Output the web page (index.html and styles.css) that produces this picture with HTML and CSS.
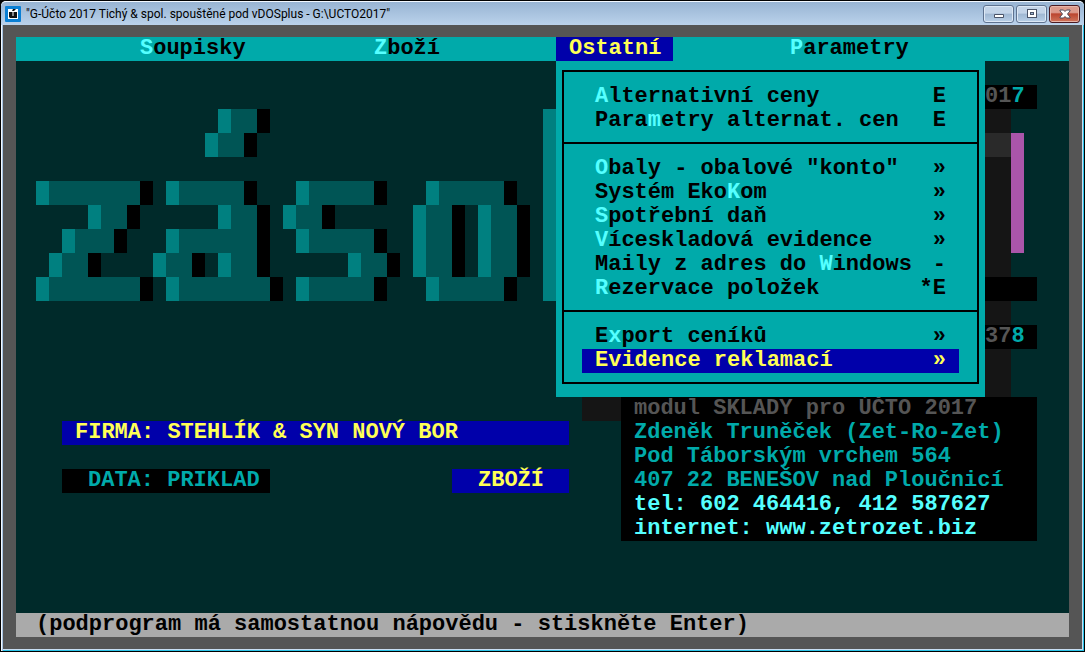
FILE: index.html
```html
<!DOCTYPE html>
<html lang="cs">
<head>
<meta charset="utf-8">
<title>G-Účto 2017</title>
<link rel="stylesheet" href="styles.css">
</head>
<body>
<div class="window">
  <header class="titlebar">
    <svg class="app-icon" viewBox="0 0 16 16" aria-hidden="true">
      <rect width="16" height="16" rx="1" fill="#0a7fd4"/>
      <rect x="3" y="3" width="10" height="10" fill="#fff"/>
      <path d="M4 6h3v4h2V6h3v6H5l-1-1zM8 3h3L9 5H7z" fill="#111"/>
      <path d="M7 6h2v4H7z" fill="#888"/>
    </svg>
    <h1 class="title">"G-Účto 2017 Tichý &amp; spol. spouštěné pod vDOSplus - G:\UCTO2017"</h1>
    <div class="controls">
      <button class="control" type="button" aria-label="Minimalizovat">
        <svg viewBox="0 0 12 10"><rect x="1" y="5" width="10" height="4" rx="1" fill="#4b5468"/><path d="M2 6h8v2H2z" fill="#fff"/></svg>
      </button>
      <button class="control" type="button" aria-label="Maximalizovat">
        <svg viewBox="0 0 12 10"><path d="M1 0h10v9H1z" fill="#4b5468"/><path d="M2 1h8v7H2z" fill="#fff"/><path d="M4 3h4v3H4z" fill="#4b5468"/><path d="M5 4h2v1H5z" fill="#9db8d4"/></svg>
      </button>
      <button class="control close" type="button" aria-label="Zavřít">
        <svg viewBox="0 0 12 10"><path d="M1 1h3.500L6 2.500 7.500 1H11v1L8.500 5 11 8v1H7.500L6 7.500 4.500 9H1V8l2.500-3L1 2z" fill="#fff" stroke="#4d4a5c"/></svg>
      </button>
    </div>
  </header>

  <main class="screen">
    <nav class="menubar">
      <button class="menu-title soupisky" type="button"><b>S</b>oupisky</button>
      <button class="menu-title zbozi" type="button"><b>Z</b>boží</button>
      <div class="menu-holder">
        <button class="menu-title active" type="button" aria-expanded="true">Ostatní</button>
        <div class="dropdown">
          <div class="frame">
            <div class="group">
              <button class="item" type="button"><span><b>A</b>lternativní ceny</span><span>E</span></button>
              <button class="item" type="button"><span>Para<b>m</b>etry alternat. cen</span><span>E</span></button>
            </div>
            <div class="group">
              <button class="item" type="button"><span><b>O</b>baly - obalové "konto"</span><span>»</span></button>
              <button class="item" type="button"><span>Systém Eko<b>K</b>om</span><span>»</span></button>
              <button class="item" type="button"><span><b>S</b>potřební daň</span><span>»</span></button>
              <button class="item" type="button"><span><b>V</b>íceskladová evidence</span><span>»</span></button>
              <button class="item" type="button"><span>Maily z adres do <b>W</b>indows</span><span>-</span></button>
              <button class="item" type="button"><span><b>R</b>ezervace položek</span><span>*E</span></button>
            </div>
            <div class="group">
              <button class="item" type="button"><span>E<b>x</b>port ceníků</span><span>»</span></button>
              <button class="item selected" type="button"><span>Evidence reklamací</span><span>»</span></button>
            </div>
          </div>
        </div>
      </div>
      <button class="menu-title parametry" type="button"><b>P</b>arametry</button>
    </nav>

    <section class="desktop">
      <svg class="banner" viewBox="0 0 40 8" preserveAspectRatio="none" shape-rendering="crispEdges" role="img" aria-label="zásoby">
        <path fill="#008080" d="M14 0h1v1h-1zM13 1h1v1h-1z
          M0 3h1v1h-1zM4 4h1v1h-1zM2 5h1v1h-1zM1 6h1v1h-1zM0 7h1v1h-1z
          M10 3h1v1h-1zM14 4h1v1h-1zM10 5h1v1h-1zM9 6h1v1h-1zM14 6h1v1h-1zM10 7h1v1h-1z
          M20 3h1v1h-1zM19 4h1v1h-1zM20 5h1v1h-1zM24 6h1v1h-1zM20 7h1v1h-1z
          M30 3h1v1h-1zM29 4h1v3h-1zM34 4h1v3h-1zM30 7h1v1h-1zM39 0h1v8h-1z"/>
        <path fill="#005555" d="M15 0h2v1h-2zM14 1h2v1h-2z
          M1 3h7v1h-7zM5 4h2v1h-2zM3 5h3v1h-3zM2 6h2v1h-2zM1 7h7v1h-7z
          M11 3h5v1h-5zM15 4h2v1h-2zM11 5h6v1h-6zM10 6h2v1h-2zM15 6h2v1h-2zM11 7h7v1h-7z
          M21 3h5v1h-5zM20 4h2v1h-2zM21 5h5v1h-5zM25 6h2v1h-2zM21 7h5v1h-5z
          M31 3h5v1h-5zM30 4h2v3h-2zM35 4h2v3h-2zM31 7h5v1h-5z"/>
        <path fill="#000" d="M17 0h1v1h-1zM16 1h1v1h-1z
          M8 3h1v1h-1zM7 4h1v1h-1zM6 5h1v1h-1zM4 6h1v1h-1zM8 7h1v1h-1z
          M16 3h1v1h-1zM17 4h1v3h-1zM12 6h1v1h-1zM18 7h1v1h-1z
          M26 3h1v1h-1zM22 4h1v1h-1zM26 5h1v1h-1zM27 6h1v1h-1zM26 7h1v1h-1z
          M36 3h1v1h-1zM32 4h1v3h-1zM37 4h1v3h-1zM36 7h1v1h-1z"/>
      </svg>
      <div class="shadow"></div>
      <div class="shade-light"></div>
      <div class="stripe"></div>
      <div class="tag year">01<em>7</em></div>
      <div class="tag blank"></div>
      <div class="tag build">37<em>8</em></div>
      <div class="firm">FIRMA: STEHLÍK &amp; SYN NOVÝ BOR</div>
      <div class="data">DATA: PRIKLAD</div>
      <div class="mode">ZBOŽÍ</div>
      <address class="contact">
        <span class="dim">modul SKLADY pro ÚČTO 2017</span>
        <span>Zdeněk Truněček (Zet-Ro-Zet)</span>
        <span>Pod Táborským vrchem 564</span>
        <span>407 22 BENEŠOV nad Ploučnicí</span>
        <span class="bright">tel: 602 464416, 412 587627</span>
        <span class="bright">internet: www.zetrozet.biz</span>
      </address>
    </section>

    <footer class="status">(podprogram má samostatnou nápovědu - stiskněte Enter)</footer>
  </main>
</div>
</body>
</html>
```
FILE: styles.css
```css
* {
  box-sizing: border-box;
}

body {
  margin: 0;
  background: #000;
}

button {
  margin: 0;
  padding: 0;
  border: 0;
  background: none;
  color: inherit;
  font: inherit;
  text-align: left;
  white-space: pre;
}

.window {
  display: flex;
  flex-direction: column;
  min-height: 100vh;
  background: #555;
  border: 1px solid #000;
  border-radius: 6px 6px 0 0;
  box-shadow: inset 1px 1px #f2f8ff, inset 2px 0 #a9c4e2, inset -1px -1px #2cc4e8, inset -2px -2px #c9def2;
}

.titlebar {
  display: flex;
  align-items: center;
  gap: 5px;
  height: 24px;
  padding: 1px 4px 0;
  border-radius: 5px 5px 0 0;
  border-top: 1px solid #f2f8ff;
  background: linear-gradient(#98b4d3, #bad2eb);
}

.app-icon {
  width: 16px;
  height: 16px;
}

.title {
  flex: 1;
  margin: 0;
  color: #000;
  font: 12px/20px Roboto, "Open Sans", sans-serif;
  white-space: nowrap;
}

.controls {
  display: flex;
  gap: 2px;
}

.control {
  display: flex;
  align-items: center;
  justify-content: center;
  width: 31px;
  height: 18px;
  border: 1px solid #5f7390;
  border-radius: 3px;
  background: linear-gradient(#c3d4e8 45%, #9fb7d2 50%, #b9d0e8);
  box-shadow: inset 0 0 0 1px #dce8f5;
}

.control svg {
  width: 12px;
  height: 10px;
}

.close {
  border-color: #4a1a22;
  background: linear-gradient(#dc9a8c 40%, #bb4630 50%, #d0755c);
  box-shadow: inset 0 0 0 1px #e8b5a8;
}

.screen {
  flex: 1;
  display: flex;
  flex-direction: column;
  margin: 12px 15px 14px;
  color: #000;
  font: bold 22px/24px "Liberation Mono", monospace;
}

.menubar {
  display: grid;
  grid-template-columns: repeat(80, 13px);
  height: 24px;
  padding-left: 7px;
  background: #0aa;
}

.menubar b {
  color: #5ff;
}

.soupisky {
  grid-area: 1 / 10 / 2 / 19;
}

.zbozi {
  grid-area: 1 / 28 / 2 / 34;
}

.parametry {
  grid-area: 1 / 60 / 2 / 70;
}

.menu-holder {
  grid-area: 1 / 42 / 2 / 51;
  position: relative;
}

.active {
  width: 100%;
  padding-left: 13px;
  background: #00a;
  color: #ff5;
}

.dropdown {
  position: absolute;
  top: 100%;
  left: 0;
  z-index: 1;
  width: 429px;
  padding: 9px 6px 13px;
  background: #0aa;
}

.frame {
  border: 2px solid #000;
}

.group {
  padding: 13px 18px 9px;
}

.group + .group {
  border-top: 2px solid #000;
}

.item {
  display: flex;
  justify-content: space-between;
  width: 100%;
  padding: 0 13px;
}

.selected {
  background: #00a;
  color: #ff5;
}

.desktop {
  flex: 1;
  display: grid;
  grid-template-columns: repeat(80, 13px);
  grid-template-rows: repeat(23, 24px);
  padding-left: 7px;
  background: #002a2a;
  white-space: pre;
}

.banner {
  grid-area: 3 / 2 / 11 / 42;
  width: 100%;
  height: 100%;
}

.shadow {
  grid-area: 3 / 44 / 16 / 77;
  background: #151515;
}

.shade-light {
  grid-area: 4 / 75 / 5 / 77;
  background: #2a2a2a;
}

.stripe {
  grid-area: 4 / 77 / 9 / 78;
  background: #a5a;
}

.tag {
  background: #000;
  color: #555;
}

.tag em {
  color: #0aa;
  font-style: normal;
}

.year {
  grid-area: 2 / 75 / 3 / 79;
}

.blank {
  grid-area: 10 / 75 / 11 / 79;
}

.build {
  grid-area: 12 / 75 / 13 / 79;
}

.firm,
.mode {
  background: #00a;
  color: #ff5;
}

.firm {
  grid-area: 16 / 4 / 17 / 43;
  padding-left: 13px;
}

.data {
  grid-area: 18 / 4 / 19 / 20;
  padding-left: 26px;
  background: #000;
  color: #0aa;
}

.mode {
  grid-area: 18 / 34 / 19 / 43;
  padding-left: 26px;
}

.contact {
  grid-area: 15 / 47 / 21 / 79;
  display: flex;
  flex-direction: column;
  padding-left: 13px;
  background: #000;
  color: #0aa;
  font-style: normal;
}

.dim {
  color: #555;
}

.bright {
  color: #5ff;
}

.status {
  padding-left: 20px;
  background: #aaa;
}
```
